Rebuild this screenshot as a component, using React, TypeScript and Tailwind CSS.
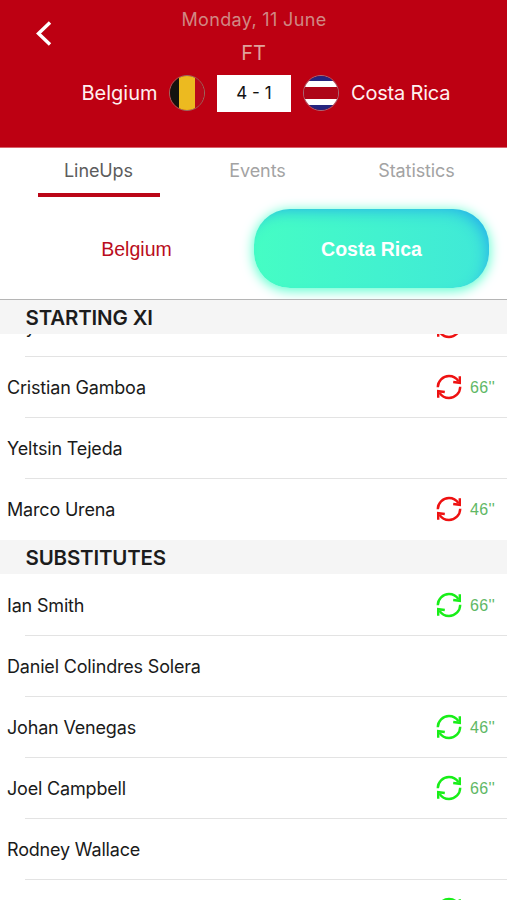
import { useState } from 'react';

type Player = {
  name: string;
  minute?: string;
};

const STARTING: Player[] = [
  { name: 'Bryan Oviedo', minute: "46''" },
  { name: 'Cristian Gamboa', minute: "66''" },
  { name: 'Yeltsin Tejeda' },
  { name: 'Marco Urena', minute: "46''" },
];

const SUBSTITUTES: Player[] = [
  { name: 'Ian Smith', minute: "66''" },
  { name: 'Daniel Colindres Solera' },
  { name: 'Johan Venegas', minute: "46''" },
  { name: 'Joel Campbell', minute: "66''" },
  { name: 'Rodney Wallace' },
  { name: 'David Guzman', minute: "66''" },
];

const TABS = ['LineUps', 'Events', 'Statistics'];

function SwapIcon({ className }: { className: string }) {
  return (
    <svg viewBox="0 0 26 26" className={`h-[26px] w-[26px] shrink-0 ${className}`} fill="none" stroke="currentColor" strokeWidth="2.4">
      <path d="M1.8 13.2A11.2 11.2 0 0 1 13 2A11.2 11.2 0 0 1 22.4 7.2" />
      <path d="M23.8 2.2V8.8L17.2 8" />
      <path d="M24.2 12.8A11.2 11.2 0 0 1 13 24A11.2 11.2 0 0 1 3.6 18.8" />
      <path d="M2.2 23.8V17.2L8.8 18" />
    </svg>
  );
}

function BelgiumFlag() {
  return (
    <span className="ml-3 flex size-9 overflow-hidden rounded-full border border-[#9a6a60]">
      <span className="w-[9px] bg-[#15130f]" />
      <span className="w-4 bg-[#ecba20]" />
      <span className="flex-1 bg-[#b8091b]" />
    </span>
  );
}

function CostaRicaFlag() {
  return (
    <span className="ml-3 flex size-9 flex-col overflow-hidden rounded-full border border-[#a86a78]">
      <span className="h-[5px] bg-[#25257f]" />
      <span className="h-1.5 bg-white" />
      <span className="h-3 bg-[#ae0518]" />
      <span className="h-1.5 bg-white" />
      <span className="flex-1 bg-[#25257f]" />
    </span>
  );
}

function SectionTitle({ title }: { title: string }) {
  return (
    <h2 className="relative h-[34px] shrink-0 bg-[#f5f5f5] pl-[25.5px] text-[20.5px] leading-[35px] font-semibold tracking-[-0.17px] text-[#1c1c1c]">
      {title}
    </h2>
  );
}

function PlayerRow({ player, iconClass, last }: { player: Player; iconClass: string; last: boolean }) {
  return (
    <li>
      <div className="flex h-[60px] items-center pr-2.5 pl-[7px]">
        <span className="flex-1 text-[18px] tracking-[-0.18px] text-[#1a1a1a]">{player.name}</span>
        {player.minute && (
          <>
            <SwapIcon className={iconClass} />
            <span className="ml-2 w-[27px] pt-px font-['Liberation_Sans',sans-serif] text-[16px] tracking-[0.3px] whitespace-nowrap text-[#5fb865]">
              {player.minute}
            </span>
          </>
        )}
      </div>
      {!last && <div className="ml-[25px] h-px bg-[#e3e3e3]" />}
    </li>
  );
}

function PlayerList({ players, iconClass }: { players: Player[]; iconClass: string }) {
  return (
    <ul>
      {players.map((p, i) => (
        <PlayerRow key={p.name} player={p} iconClass={iconClass} last={i === players.length - 1} />
      ))}
    </ul>
  );
}

export default function App() {
  const [tab, setTab] = useState('LineUps');

  return (
    <div className="flex h-[900px] w-[507px] flex-col overflow-hidden bg-white font-['Inter','Liberation_Sans',sans-serif]">
      <header className="grid h-[148px] shrink-0 grid-cols-[80px_1fr_80px] grid-rows-[36px_34px_46px] border-b border-[#d9636c] bg-[#bd0012]">
        <button type="button" aria-label="Back" className="row-span-2 flex items-start pt-5 pl-[35px]">
          <svg viewBox="0 0 18 28" className="h-7 w-[18px]" fill="none" stroke="white" strokeWidth="3.4">
            <path d="M15 2.5L3.5 13.5L15 24.5" />
          </svg>
        </button>
        <p className="pt-2 pl-px text-center text-[18px] leading-6 tracking-[0.35px] text-[#d08884]">Monday, 11 June</p>
        <span />
        <p className="pt-[5px] text-center text-[20px] leading-6 text-[#dfa29c]">FT</p>
        <span />
        <div className="col-span-3 flex items-center pl-[81.5px] text-[20px] text-[#fff0f0]">
          <span className="w-[75.5px]">Belgium</span>
          <BelgiumFlag />
          <span className="ml-3 h-[37px] w-[74px] bg-white text-center text-[17px] leading-[37px] text-[#111]">4 - 1</span>
          <CostaRicaFlag />
          <span className="ml-3 tracking-[-0.2px]">Costa Rica</span>
        </div>
      </header>

      <nav className="flex h-12 shrink-0 px-[19px] text-[18px] tracking-[-0.1px]">
        {TABS.map((t) => (
          <button key={t} type="button" onClick={() => setTab(t)} className="flex w-[159px] shrink-0 flex-col items-center">
            <span className={`h-[45px] leading-[45px] ${t === tab ? 'text-[#5c5c5c]' : 'text-[#a3a3a3]'}`}>{t}</span>
            {t === tab && <span className="h-1 w-[122px] shrink-0 bg-[#bb0617]" />}
          </button>
        ))}
      </nav>

      <div className="flex h-[104px] shrink-0 items-start overflow-hidden border-b border-[#b5b5b5] pt-[13px] pl-[19px] font-['Liberation_Sans',sans-serif] text-[19.5px]">
        <button type="button" className="h-[79px] w-[235px] pt-0.5 text-[#b90d20]">
          Belgium
        </button>
        <button
          type="button"
          className="h-[79px] w-[235px] rounded-[36px] bg-linear-to-r from-[#45fdc4] to-[#40e8d8] pt-0.5 font-bold text-white shadow-[inset_-7px_7px_16px_-7px_#22a8ec,0_2px_12px_1px_#5fffd0]"
        >
          Costa Rica
        </button>
      </div>

      <SectionTitle title="STARTING XI" />
      <div className="shrink-0 overflow-hidden pb-px">
        <div className="-mt-[38px]">
          <PlayerList players={STARTING} iconClass="text-[#ee1111]" />
        </div>
      </div>
      <SectionTitle title="SUBSTITUTES" />
      <div className="pt-px">
        <PlayerList players={SUBSTITUTES} iconClass="text-[#18ee18]" />
      </div>
    </div>
  );
}
